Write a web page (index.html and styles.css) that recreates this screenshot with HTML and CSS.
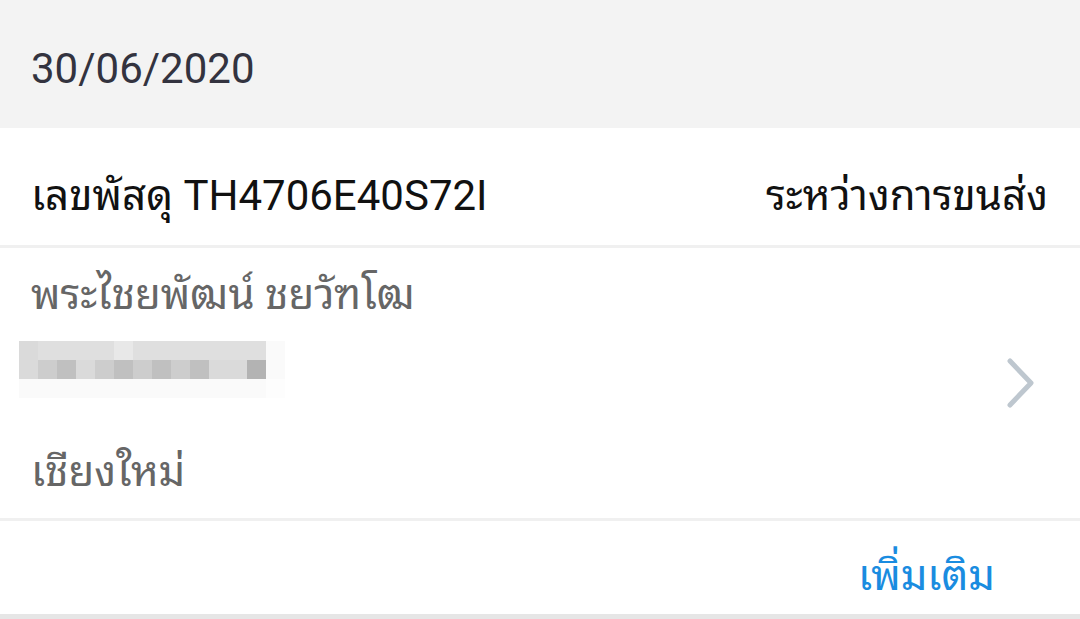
FILE: index.html
```html
<!DOCTYPE html>
<html lang="th">
<head>
  <meta charset="UTF-8">
  <meta name="viewport" content="width=device-width, initial-scale=1.0">
  <title>Parcel</title>
  <link rel="stylesheet" href="styles.css">
</head>
<body>
  <!-- Date header -->
  <div class="date-bar">30/06/2020</div>

  <!-- Parcel number -->
  <div class="parcel-row">
    <div class="parcel-no">เลขพัสดุ TH4706E40S72I</div>
    <div class="parcel-status">ระหว่างการขนส่ง</div>
  </div>

  <!-- Address -->
  <div class="address">
    <div class="address-info">
      <div class="name">พระไชยพัฒน์ ชยวัฑโฒ</div>
      <div class="mosaic">
        <span class="c2"></span><span class="c1"></span><span class="c1"></span><span class="c1"></span><span class="c1"></span><span class="c0"></span><span class="c1"></span><span class="c1"></span><span class="c1"></span><span class="c1"></span><span class="c1"></span><span class="c1"></span><span class="c1"></span><span class="c5"></span>
        <span class="c2"></span><span class="c3"></span><span class="c4"></span><span class="c2"></span><span class="c3"></span><span class="c4"></span><span class="c3"></span><span class="c4"></span><span class="c3"></span><span class="c4"></span><span class="c2"></span><span class="c2"></span><span class="c4 dark"></span><span class="c5"></span>
        <span class="c5"></span><span class="c5"></span><span class="c5"></span><span class="c5"></span><span class="c5"></span><span class="c5"></span><span class="c5"></span><span class="c5"></span><span class="c5"></span><span class="c5"></span><span class="c5"></span><span class="c5"></span><span class="c5"></span><span class="c6"></span>
      </div>
      <div class="city">เชียงใหม่</div>
    </div>
    <svg class="chevron" width="30" height="52" viewBox="0 0 30 52">
      <path d="M4 4 L25 26 L4 48" fill="none" stroke="#bec7cf" stroke-width="5" stroke-linecap="round" stroke-linejoin="round"/>
    </svg>
  </div>

  <!-- More -->
  <div class="more-row">
    <a href="#" class="more">เพิ่มเติม</a>
  </div>
</body>
</html>
```

FILE: styles.css
```css
/* Reset */
* {
  margin: 0;
  padding: 0;
  box-sizing: border-box;
}
body {
  font-family: Roboto, "Noto Sans Thai Looped", Loma, Garuda, Waree, Umpush, "Noto Sans Thai", "Noto Sans", sans-serif;
  background-color: #fff;
  width: 1080px;
}

/* Date header */
.date-bar {
  height: 128px;
  background-color: #f3f3f3;
  color: #33333f;
  font-size: 42px;
  display: flex;
  align-items: center;
  padding: 8px 0 0 31px;
}

/* Parcel number row */
.parcel-row {
  height: 120px;
  display: flex;
  align-items: center;
  justify-content: space-between;
  padding: 8px 32px 0 31px;
  border-bottom: 3px solid #f0f0f0;
  font-size: 42px;
  color: #111;
}

/* Address */
.address {
  height: 273px;
  display: flex;
  align-items: center;
  justify-content: space-between;
  padding: 0 44px 0 31px;
  border-bottom: 3px solid #f0f0f0;
}
.address-info {
  display: flex;
  flex-direction: column;
}
.address .name,
.address .city {
  font-size: 42px;
  color: #666;
  line-height: 60px;
}
.mosaic {
  display: grid;
  grid-template-columns: repeat(14, 19px);
  grid-template-rows: repeat(3, 19px);
  margin: 16px 0 44px -12px;
}
.mosaic .c0 { background: #e8e8e8; }
.mosaic .c1 { background: #dfdfdf; }
.mosaic .c2 { background: #dadada; }
.mosaic .c3 { background: #cdcdcd; }
.mosaic .c4 { background: #c0c0c0; }
.mosaic .c4.dark { background: #b3b3b3; }
.mosaic .c5 { background: #fafafa; }
.mosaic .c6 { background: #fdfdfd; }
.chevron {
  display: block;
}

/* More link */
.more-row {
  height: 99px;
  display: flex;
  align-items: center;
  justify-content: flex-end;
  padding: 6px 85px 0 0;
  border-bottom: 6px solid #e6e6e6;
}
.more {
  color: #1a8ce0;
  font-size: 42px;
  text-decoration: none;
}
```
